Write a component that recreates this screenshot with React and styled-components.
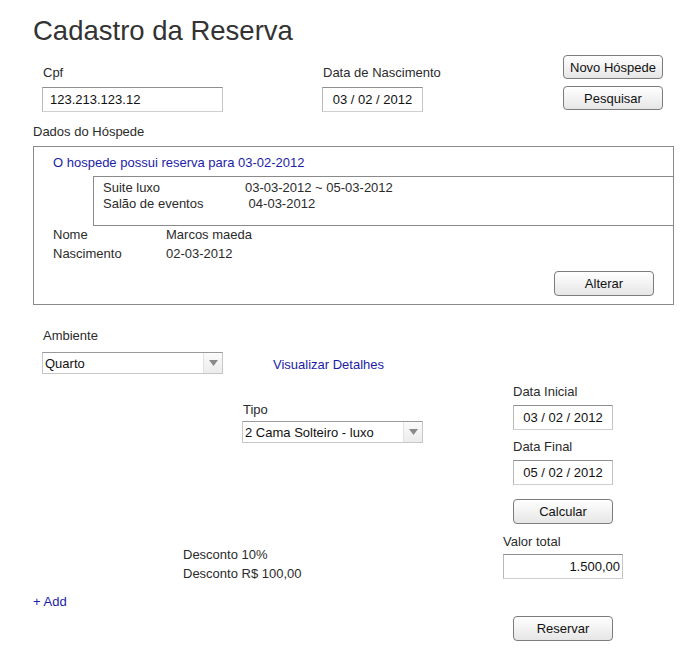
import styled, { createGlobalStyle } from "styled-components";

// Base page reset and font
const GlobalStyle = createGlobalStyle`
  body {
    margin: 0;
    background: #fff;
    font-family: "Liberation Sans", Arial, sans-serif;
    color: #2b2b2b;
  }
`;

const Page = styled.div`
  width: 681px;
  min-height: 649px;
`;

const Title = styled.h1`
  margin: 0;
  padding: 15px 0 0 33px;
  font-size: 27.5px;
  line-height: 32px;
  font-weight: normal;
  color: #333;
`;

const TopRow = styled.div`
  display: grid;
  grid-template-columns: 280px 241px 100px;
  align-items: start;
  margin-top: 8px;
  padding-left: 42px;
`;

const Field = styled.div`
  display: flex;
  flex-direction: column;
  align-items: flex-start;
  padding-top: ${(p) => p.$top || 0}px;
  margin-top: ${(p) => p.$mt || 0}px;
  margin-left: ${(p) => p.$ml || 0}px;
`;

const Label = styled.span`
  display: block;
  font-size: 13px;
  line-height: 16px;
  padding-left: ${(p) => (p.$flush ? 0 : 1)}px;
  margin-bottom: ${(p) => p.$gap ?? 5}px;
  color: #2b2b2b;
`;

const TextBox = styled.div`
  box-sizing: border-box;
  width: ${(p) => p.$w}px;
  height: 25px;
  display: flex;
  align-items: center;
  justify-content: ${(p) => p.$align || "flex-start"};
  padding: 0 ${(p) => p.$pad ?? 7}px;
  border: 1px solid #cfcfcf;
  border-top-color: #8f8f8f;
  border-left-color: #b9b9b9;
  border-right-color: #c4c4c4;
  background: #fff;
  font-size: 13px;
  color: #111;
`;

const ButtonStack = styled.div`
  display: flex;
  flex-direction: column;
  gap: 7px;
`;

const Button = styled.button`
  box-sizing: border-box;
  width: 100px;
  height: ${(p) => p.$h || 25}px;
  padding: 0;
  border: 1px solid #7c7c7c;
  border-radius: 4px;
  background: linear-gradient(#ffffff, #e6e6e6);
  font-family: inherit;
  font-size: 13px;
  color: #111;
  margin-top: ${(p) => p.$mt || 0}px;
  margin-left: ${(p) => p.$ml || 0}px;
`;

const SectionLabel = styled.div`
  margin-top: 12px;
  padding-left: 33px;
  font-size: 13px;
  line-height: 16px;
`;

const Panel = styled.section`
  box-sizing: border-box;
  width: 641px;
  margin: 6px 0 0 33px;
  padding: 8px 19px;
  border: 1px solid #8a8a8a;
  font-size: 13px;
  line-height: 16px;
`;

const Notice = styled.div`
  color: #1c1ca6;
`;

const Bookings = styled.div`
  display: grid;
  grid-template-columns: 142px 1fr;
  margin: 5px -19px 0 40px;
  padding: 3px 0 13px 9px;
  border: 1px solid #8a8a8a;
  border-right: none;
`;

const InfoGrid = styled.div`
  display: grid;
  grid-template-columns: 113px 1fr;
  row-gap: 3px;
  margin-top: 1px;
`;

const Actions = styled.div`
  display: flex;
  justify-content: flex-end;
  margin-top: 9px;
`;

const AmbienteRow = styled.div`
  display: flex;
  align-items: flex-end;
  margin-top: 23px;
  padding-left: 42px;
`;

const SelectBox = styled.div`
  box-sizing: border-box;
  width: 181px;
  height: 22px;
  display: flex;
  border: 1px solid #c6c6c6;
  border-top-color: #9a9a9a;
  background: #fff;
  font-size: 13px;
  color: #111;
`;

const SelectValue = styled.div`
  flex: 1;
  display: flex;
  align-items: center;
  padding-left: 2px;
`;

const SelectArrow = styled.div`
  width: 18px;
  display: flex;
  align-items: center;
  justify-content: center;
  border-left: 1px solid #e2e2e2;
  background: linear-gradient(#fbfbfb, #ececec);
`;

const Link = styled.a`
  display: block;
  font-size: 13px;
  line-height: 16px;
  color: #1c1ca6;
  text-decoration: none;
  margin-left: ${(p) => p.$ml || 0}px;
  margin-top: ${(p) => p.$mt || 0}px;
  margin-bottom: ${(p) => p.$mb || 0}px;
`;

const Lower = styled.div`
  display: grid;
  grid-template-columns: 470px 150px;
  padding-left: 33px;
`;

const Column = styled.div`
  display: flex;
  flex-direction: column;
  align-items: flex-start;
  padding-top: ${(p) => p.$top || 0}px;
`;

const Discounts = styled.div`
  margin: 102px 0 0 150px;
  font-size: 13px;
  line-height: 19px;
`;

function Select({ value }) {
  return (
    <SelectBox>
      <SelectValue>{value}</SelectValue>
      <SelectArrow>
        <svg width="9" height="6" viewBox="0 0 9 6">
          <polygon points="0,0 9,0 4.5,6" fill="#8a8a8a" />
        </svg>
      </SelectArrow>
    </SelectBox>
  );
}

export default function App() {
  return (
    <Page>
      <GlobalStyle />
      <Title>Cadastro da Reserva</Title>

      <TopRow>
        <Field $top={10}>
          <Label $gap={6}>Cpf</Label>
          <TextBox $w={181}>123.213.123.12</TextBox>
        </Field>
        <Field $top={10}>
          <Label $gap={6}>Data de Nascimento</Label>
          <TextBox $w={101} $align="center">03 / 02 / 2012</TextBox>
        </Field>
        <ButtonStack>
          <Button $h={24}>Novo Hóspede</Button>
          <Button $h={24}>Pesquisar</Button>
        </ButtonStack>
      </TopRow>

      <SectionLabel>Dados do Hóspede</SectionLabel>
      <Panel>
        <Notice>O hospede possui reserva para 03-02-2012</Notice>
        <Bookings>
          <span>Suite luxo</span>
          <span>03-03-2012 ~ 05-03-2012</span>
          <span>Salão de eventos</span>
          <span>&nbsp;04-03-2012</span>
        </Bookings>
        <InfoGrid>
          <span>Nome</span>
          <span>Marcos maeda</span>
          <span>Nascimento</span>
          <span>02-03-2012</span>
        </InfoGrid>
        <Actions>
          <Button>Alterar</Button>
        </Actions>
      </Panel>

      <AmbienteRow>
        <Field>
          <Label $gap={8}>Ambiente</Label>
          <Select value="Quarto" />
        </Field>
        <Link $ml={50} $mb={1}>Visualizar Detalhes</Link>
      </AmbienteRow>

      <Lower>
        <Column $top={28}>
          <Field $ml={209}>
            <Label $gap={3}>Tipo</Label>
            <Select value="2 Cama Solteiro - luxo" />
          </Field>
          <Discounts>
            <div>Desconto 10%</div>
            <div>Desconto R$ 100,00</div>
          </Discounts>
          <Link $mt={11}>+ Add</Link>
        </Column>

        <Column $top={10}>
          <Field $ml={10}>
            <Label $flush>Data Inicial</Label>
            <TextBox $w={100} $align="center">03 / 02 / 2012</TextBox>
          </Field>
          <Field $ml={10} $mt={9}>
            <Label $flush>Data Final</Label>
            <TextBox $w={100} $align="center">05 / 02 / 2012</TextBox>
          </Field>
          <Button $ml={10} $mt={14}>Calcular</Button>
          <Field $mt={10}>
            <Label $flush $gap={4}>Valor total</Label>
            <TextBox $w={120} $align="flex-end" $pad={2}>1.500,00</TextBox>
          </Field>
          <Button $ml={10} $mt={37}>Reservar</Button>
        </Column>
      </Lower>
    </Page>
  );
}
